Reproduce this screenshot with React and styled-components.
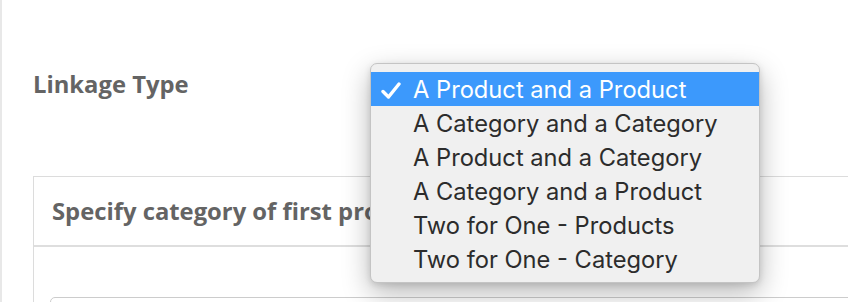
import React from 'react';
import styled, { createGlobalStyle } from 'styled-components';

const GlobalStyle = createGlobalStyle`
  html, body {
    margin: 0;
    padding: 0;
    background: #ffffff;
    overflow: hidden;
  }
`;

const Page = styled.div`
  box-sizing: border-box;
  height: 302px;
  border-left: 2px solid #e8e8e8;
  padding: 69px 0 0 31px;
  font-family: "Open Sans", "Liberation Sans", sans-serif;
`;

const FormRow = styled.div`
  display: flex;
  align-items: flex-start;
`;

const Label = styled.div`
  width: 337px;
  font-size: 23.8px;
  font-weight: 700;
  line-height: 30px;
  color: #646464;
`;

const SelectWrap = styled.div`
  position: relative;
  flex: 1;
  height: 30px;
`;

const Menu = styled.ul`
  position: absolute;
  top: -6px;
  left: 0;
  box-sizing: border-box;
  width: 390px;
  height: 220px;
  margin: 0;
  padding: 8px 0 6px;
  list-style: none;
  background: #f0f0f0;
  border: 1px solid #c4c4c4;
  border-radius: 7px;
  box-shadow: 0 10px 28px rgba(0, 0, 0, 0.28), 0 2px 6px rgba(0, 0, 0, 0.12);
  z-index: 10;
  font-family: Inter, "Liberation Sans", sans-serif;
`;

const Item = styled.li`
  position: relative;
  box-sizing: border-box;
  height: 34px;
  padding: 2px 0 0 42px;
  line-height: 32px;
  font-size: 23.7px;
  color: ${p => (p.$selected ? '#ffffff' : '#2c2c2c')};
  background: ${p => (p.$selected ? '#3c99fc' : 'transparent')};
  white-space: nowrap;
`;

const Check = styled.svg`
  position: absolute;
  left: 10px;
  top: 10px;
`;

const Card = styled.div`
  margin-top: 77px;
  width: 900px;
  border: 1px solid #dcdcdc;
`;

const CardHeader = styled.div`
  padding: 19px 18px;
  font-size: 23.8px;
  font-weight: 700;
  line-height: 30px;
  color: #646464;
  white-space: nowrap;
  border-bottom: 2px solid #dedede;
`;

const CardBody = styled.div`
  padding: 50px 16px 0;
`;

const Input = styled.div`
  height: 40px;
  border: 1px solid #cccccc;
  border-radius: 5px;
`;

const options = [
  'A Product and a Product',
  'A Category and a Category',
  'A Product and a Category',
  'A Category and a Product',
  'Two for One - Products',
  'Two for One - Category',
];

export default function App() {
  return (
    <>
      <GlobalStyle />
      <Page>
        <FormRow>
          <Label>Linkage Type</Label>
          <SelectWrap>
            <Menu>
              {options.map((o, i) => (
                <Item key={o} $selected={i === 0}>
                  {i === 0 && (
                    <Check width="20" height="17" viewBox="0 0 20 17">
                      <path
                        d="M2 9.5 L7.5 15 L18 2"
                        fill="none"
                        stroke="#ffffff"
                        strokeWidth="3.4"
                        strokeLinecap="round"
                        strokeLinejoin="round"
                      />
                    </Check>
                  )}
                  {o}
                </Item>
              ))}
            </Menu>
          </SelectWrap>
        </FormRow>
        <Card>
          <CardHeader>Specify category of first product</CardHeader>
          <CardBody>
            <Input />
          </CardBody>
        </Card>
      </Page>
    </>
  );
}
